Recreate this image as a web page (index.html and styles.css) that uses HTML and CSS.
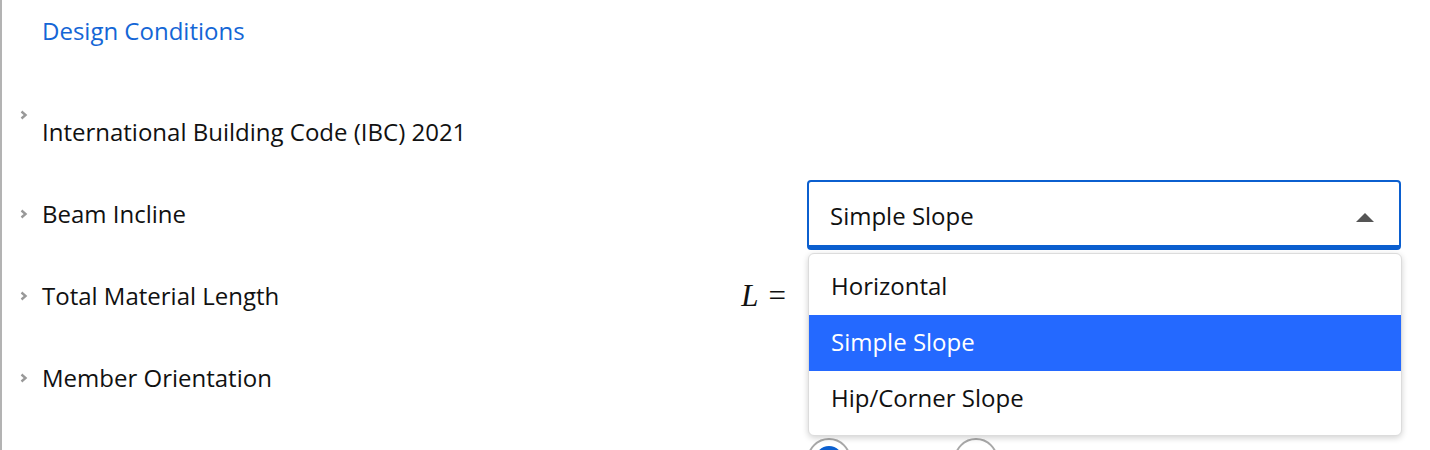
FILE: index.html
```html
<!DOCTYPE html>
<html>
<head>
<meta charset="utf-8">
<link rel="stylesheet" href="styles.css">
</head>
<body>
<div class="panel">
  <div class="title">Design Conditions</div>
  <div class="rows">
    <div class="row row-top">
      <span class="chev"><svg width="8" height="10" viewBox="0 0 8 10"><path d="M1.5 1.5 L5.5 5 L1.5 8.5" fill="none" stroke="#999" stroke-width="2.4"/></svg></span>
      <span class="label">International Building Code (IBC) 2021</span>
    </div>
    <div class="row">
      <span class="chev"><svg width="8" height="10" viewBox="0 0 8 10"><path d="M1.5 1.5 L5.5 5 L1.5 8.5" fill="none" stroke="#999" stroke-width="2.4"/></svg></span>
      <span class="label">Beam Incline</span>
      <span class="prefix"></span>
      <div class="control">
        <div class="select">
          <span>Simple Slope</span>
          <span class="caret"></span>
        </div>
        <ul class="menu">
          <li class="item">Horizontal</li>
          <li class="item active">Simple Slope</li>
          <li class="item">Hip/Corner Slope</li>
        </ul>
      </div>
    </div>
    <div class="row">
      <span class="chev"><svg width="8" height="10" viewBox="0 0 8 10"><path d="M1.5 1.5 L5.5 5 L1.5 8.5" fill="none" stroke="#999" stroke-width="2.4"/></svg></span>
      <span class="label">Total Material Length</span>
      <span class="prefix"><i class="math-l">L</i><span class="math-eq">=</span></span>
      <div class="control"></div>
    </div>
    <div class="row">
      <span class="chev"><svg width="8" height="10" viewBox="0 0 8 10"><path d="M1.5 1.5 L5.5 5 L1.5 8.5" fill="none" stroke="#999" stroke-width="2.4"/></svg></span>
      <span class="label">Member Orientation</span>
    </div>
    <div class="row">
      <span class="chev"></span>
      <span class="label"></span>
      <span class="prefix"></span>
      <div class="control radios">
        <span class="radio checked"></span>
        <span class="radio"></span>
      </div>
    </div>
  </div>
</div>
</body>
</html>
```
FILE: styles.css
```css
html, body {
  margin: 0;
  background: #fff;
  overflow: hidden;
  height: 450px;
}
body {
  font-family: "Open Sans", "Noto Sans", sans-serif;
  color: #111;
}
.panel {
  border-left: 2px solid #b3b3b3;
  height: 450px;
  box-sizing: border-box;
  padding: 15px 29px 0 18px;
  overflow: hidden;
}
.title {
  color: #1466d6;
  font-size: 24px;
  line-height: 32px;
  padding-left: 22px;
}
.rows {
  margin-top: 51px;
  display: flex;
  flex-direction: column;
  gap: 14px;
}
.row {
  display: flex;
  align-items: center;
  height: 68px;
  font-size: 24px;
}
.chev {
  width: 22px;
  flex: none;
  display: flex;
  align-items: center;
}
.chev svg { display: block; }
.row-top .chev {
  align-self: flex-start;
  margin-top: 12px;
}
.label {
  flex: 1;
  line-height: 32px;
}
.prefix {
  width: 87px;
  flex: none;
  padding-right: 21px;
  box-sizing: border-box;
  text-align: right;
  font-family: "Liberation Serif", "DejaVu Serif", serif;
  font-size: 31px;
  white-space: nowrap;
}
.math-l { font-style: italic; margin-right: 10px; }
.control {
  width: 594px;
  flex: none;
  position: relative;
  height: 68px;
}
.select {
  box-sizing: border-box;
  height: 70px;
  border: 2px solid #0b5fcf;
  border-bottom-width: 5px;
  border-radius: 4px;
  display: flex;
  align-items: center;
  justify-content: space-between;
  padding: 4px 25px 0 21px;
  background: #fff;
}
.caret {
  width: 0;
  height: 0;
  border-left: 9px solid transparent;
  border-right: 9px solid transparent;
  border-bottom: 9px solid #555;
  margin-top: 3px;
}
.menu {
  position: absolute;
  top: 73px;
  left: 1px;
  width: 594px;
  box-sizing: border-box;
  margin: 0;
  padding: 5px 0 8px;
  list-style: none;
  background: #fff;
  border: 1px solid #dcdcdc;
  border-radius: 6px;
  box-shadow: 0 2px 6px rgba(0, 0, 0, 0.18);
  z-index: 5;
}
.item {
  height: 56px;
  display: flex;
  align-items: center;
  padding: 0 0 3px 22px;
  box-sizing: border-box;
  font-size: 24px;
}
.item.active {
  background: #2469ff;
  color: #fff;
}
.radios {
  display: flex;
  gap: 103px;
  padding-left: 1px;
  align-items: center;
}
.radio {
  width: 44px;
  height: 44px;
  box-sizing: border-box;
  border: 2px solid #a8a8a8;
  border-radius: 50%;
  background: #fff;
  flex: none;
  display: flex;
  align-items: center;
  justify-content: center;
}
.radio.checked::after {
  content: "";
  width: 28px;
  height: 28px;
  border-radius: 50%;
  background: #0b5fcf;
}
```
